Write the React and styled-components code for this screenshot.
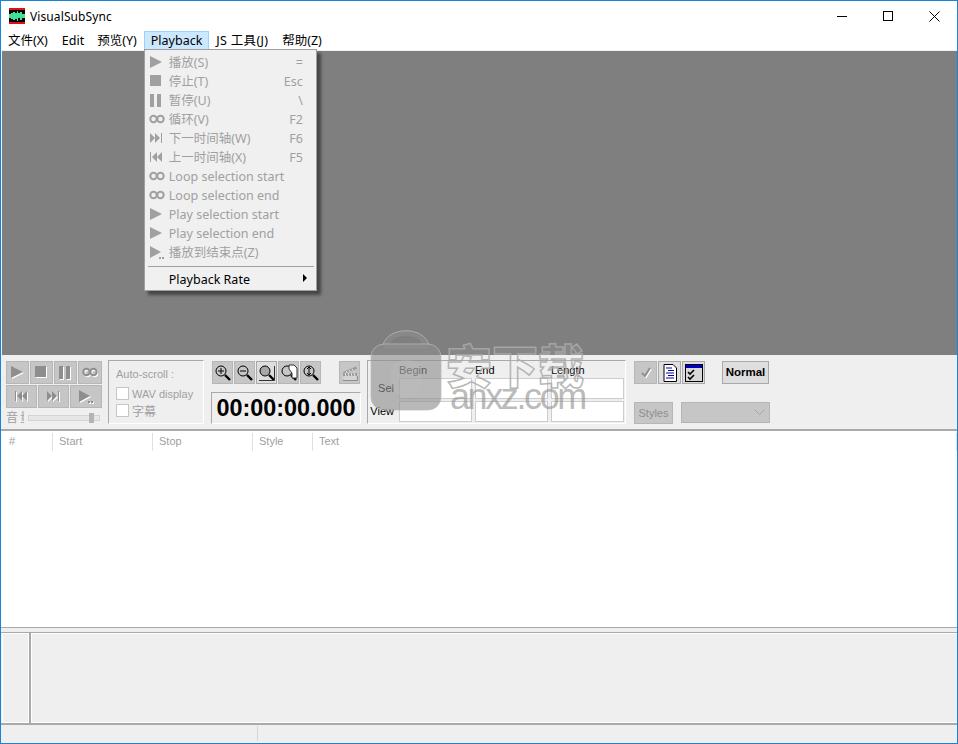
import React from 'react';
import styled, { createGlobalStyle } from 'styled-components';

const GlobalStyle = createGlobalStyle`
  html, body {
    margin: 0;
    padding: 0;
    background: #fff;
  }
  * {
    box-sizing: border-box;
  }
`;

const UI_FONT = '"Noto Sans", "Noto Sans CJK SC", sans-serif';
const OLD_FONT = '"Liberation Sans", "Noto Sans CJK SC", sans-serif';
const DISABLED = '#a0a0a0';

const glyphs = {
  play: <polygon points="1,1 13,7 1,13" />,
  stop: <rect x="1" y="1" width="11" height="11" />,
  pause: (
    <>
      <rect x="1" y="1" width="4" height="13" />
      <rect x="8" y="1" width="4" height="13" />
    </>
  ),
  loop: (
    <g fill="none" stroke="currentColor" strokeWidth="2">
      <circle cx="4.5" cy="7" r="3.2" />
      <circle cx="11.5" cy="7" r="3.2" />
    </g>
  ),
  next: (
    <>
      <polygon points="1,2 6,7 1,12" />
      <polygon points="6,2 11,7 6,12" />
      <rect x="12" y="2" width="1" height="10" />
    </>
  ),
  prev: (
    <>
      <rect x="1" y="2" width="1" height="10" />
      <polygon points="8,2 3,7 8,12" />
      <polygon points="13,2 8,7 13,12" />
    </>
  ),
  playEnd: (
    <>
      <polygon points="1,1 12,7 1,13" />
      <rect x="10" y="12" width="2" height="2" />
      <rect x="13" y="12" width="2" height="2" />
    </>
  ),
  check: <polyline points="4,8 7,11 12,3" fill="none" stroke="currentColor" strokeWidth="2" />,
};

const MenuGlyph = ({ name }) => (
  <GlyphSvg viewBox="0 0 16 15" width="16" height="15" $color={DISABLED}>
    {glyphs[name]}
  </GlyphSvg>
);

// disabled toolbar glyph: white copy shifted down/right under the grey one
const BevelGlyph = ({ name, size = 16 }) => (
  <svg viewBox="0 0 16 16" width={size} height={size} fill="currentColor">
    <g transform="translate(1 1)" color="#fff" fill="#fff">
      {glyphs[name]}
    </g>
    <g color="#8e8e8e" fill="#8e8e8e">
      {glyphs[name]}
    </g>
  </svg>
);

const ClapperIcon = () => (
  <svg viewBox="0 0 16 16" width="16" height="16">
    <path d="M1 7 L14 1.5 L15 4 L2 8 Z" fill="#9a9a9a" />
    <path d="M4 6 L5 7 M7 4.8 L8 6 M10 3.6 L11 5" stroke="#e8e8e8" />
    <rect x="1" y="8" width="14" height="3" fill="#9a9a9a" />
    <path d="M3 8 L4 11 M6 8 L7 11 M9 8 L10 11 M12 8 L13 11" stroke="#e8e8e8" />
    <rect x="1.5" y="11" width="13" height="4" fill="#d4d4d4" />
    <path d="M1 15.5 H15.5 V11" fill="none" stroke="#8e8e8e" />
  </svg>
);

const Lens = ({ fill = 'none', children }) => (
  <svg viewBox="0 0 18 18" width="18" height="18" fill="none" stroke="#000">
    <circle cx="7" cy="7" r="5" fill={fill} />
    <path d="M11 11 L16 16" strokeWidth="2.4" />
    {children}
  </svg>
);

const zoomIcons = [
  <Lens key="in"><path d="M4 7 H10 M7 4 V10" /></Lens>,
  <Lens key="out"><path d="M4 7 H10" /></Lens>,
  <Lens key="sel" fill="#a8a8a8"><path d="M1 16.5 H16.5 V2" stroke="#333" /></Lens>,
  <Lens key="all"><path d="M9 1 H14 L17 4 V14 H12 V9 L9 5 Z" fill="#fff" stroke="#333" /></Lens>,
  <Lens key="vert"><path d="M7 3 V11 M5 5 L7 3 L9 5 M5 9 L7 11 L9 9" /></Lens>,
];

const AppIcon = () => (
  <svg viewBox="0 0 16 16" width="16" height="16">
    <rect width="16" height="16" fill="#000" />
    <rect width="16" height="2" fill="#e01010" />
    <rect y="14" width="16" height="2" fill="#e01010" />
    <path d="M0 6 H2 V5 H4 V4 H6 V5 H8 V3 H9 V5 H11 V4 H13 V6 H16 V10 H13 V12 H11 V10 H9 V13 H8 V11 H6 V12 H4 V11 H2 V10 H0 Z" fill="#3ee09a" />
  </svg>
);

const DocIcon = () => (
  <svg viewBox="0 0 16 18" width="16" height="18">
    <path d="M2 .5 H11 L14.5 4 V17.5 H2 Z" fill="#fff" stroke="#000" />
    <path d="M4 4 H10 M6 6.5 H12 M4 9 H12 M6 11.5 H12 M4 14 H12" stroke="#0000a8" strokeWidth="1.2" />
  </svg>
);

const CheckWindowIcon = () => (
  <svg viewBox="0 0 18 18" width="18" height="18">
    <rect x=".5" y=".5" width="17" height="17" fill="#d8d8d8" stroke="#000" />
    <rect x="1" y="1" width="16" height="3" fill="#0000c8" />
    <path d="M3 8 L5 10 L9 6 M3 13 L5 15 L9 11" fill="none" stroke="#000" strokeWidth="1.6" />
  </svg>
);

const menuRows = [
  { icon: 'play', label: '播放(S)', key: '=' },
  { icon: 'stop', label: '停止(T)', key: 'Esc' },
  { icon: 'pause', label: '暂停(U)', key: '\\' },
  { icon: 'loop', label: '循环(V)', key: 'F2' },
  { icon: 'next', label: '下一时间轴(W)', key: 'F6' },
  { icon: 'prev', label: '上一时间轴(X)', key: 'F5' },
  { icon: 'loop', label: 'Loop selection start' },
  { icon: 'loop', label: 'Loop selection end' },
  { icon: 'play', label: 'Play selection start' },
  { icon: 'play', label: 'Play selection end' },
  { icon: 'playEnd', label: '播放到结束点(Z)' },
];

const columns = [
  { label: '#', width: 52 },
  { label: 'Start', width: 100 },
  { label: 'Stop', width: 100 },
  { label: 'Style', width: 60 },
  { label: 'Text' },
];

function App() {
  return (
    <Window>
      <GlobalStyle />
      <TitleBar>
        <AppIcon />
        <TitleText>VisualSubSync</TitleText>
        <WindowControls>
          <ControlButton>
            <svg width="10" height="10"><path d="M0 5.5 H10" stroke="#000" /></svg>
          </ControlButton>
          <ControlButton>
            <svg width="10" height="10"><rect x=".5" y=".5" width="9" height="9" fill="none" stroke="#000" /></svg>
          </ControlButton>
          <ControlButton>
            <svg width="11" height="11"><path d="M.5 .5 L10.5 10.5 M10.5 .5 L.5 10.5" stroke="#000" /></svg>
          </ControlButton>
        </WindowControls>
      </TitleBar>

      <MenuBar>
        <MenuItem>文件(X)</MenuItem>
        <MenuItem $tight>Edit</MenuItem>
        <MenuItem>预览(Y)</MenuItem>
        <MenuItem $open>
          Playback
          <Dropdown>
            {menuRows.map(row => (
              <DropRow key={row.label}>
                <DropIcon><MenuGlyph name={row.icon} /></DropIcon>
                <DropLabel>{row.label}</DropLabel>
                <DropKey>{row.key}</DropKey>
              </DropRow>
            ))}
            <DropSeparator />
            <DropRow $enabled>
              <DropIcon />
              <DropLabel>Playback Rate</DropLabel>
              <SubArrow />
            </DropRow>
          </Dropdown>
        </MenuItem>
        <MenuItem $wide>JS 工具(J)</MenuItem>
        <MenuItem>帮助(Z)</MenuItem>
      </MenuBar>

      <WaveArea />

      <Toolbar>
        <PlayerPanel>
          <TransportRow $columns="23px 23px 23px 24px">
            <ToolButton><BevelGlyph name="play" /></ToolButton>
            <ToolButton><BevelGlyph name="stop" /></ToolButton>
            <ToolButton><BevelGlyph name="pause" /></ToolButton>
            <ToolButton><BevelGlyph name="loop" /></ToolButton>
          </TransportRow>
          <TransportRow $columns="31px 31px 32px">
            <ToolButton><BevelGlyph name="prev" /></ToolButton>
            <ToolButton><BevelGlyph name="next" /></ToolButton>
            <ToolButton><BevelGlyph name="playEnd" /></ToolButton>
          </TransportRow>
          <VolumeRow>
            <VolumeLabel>音量</VolumeLabel>
            <VolumeTrack><VolumeThumb /></VolumeTrack>
          </VolumeRow>
        </PlayerPanel>

        <AutoScrollGroup>
          <GroupCaption>Auto-scroll :</GroupCaption>
          <CheckRow><CheckBox />WAV display</CheckRow>
          <CheckRow $cjk><CheckBox />字幕</CheckRow>
        </AutoScrollGroup>

        <TimePanel>
          <ZoomRow>
            {zoomIcons.map((icon, i) => (
              <ZoomButton key={i} $pressed={i === 2}>{icon}</ZoomButton>
            ))}
            <ClapperButton><ClapperIcon /></ClapperButton>
          </ZoomRow>
          <TimeDisplay>00:00:00.000</TimeDisplay>
        </TimePanel>

        <SelectionGroup>
          <span />
          <ColumnLabel>Begin</ColumnLabel>
          <ColumnLabel>End</ColumnLabel>
          <ColumnLabel>Length</ColumnLabel>
          <RowLabel>Sel</RowLabel>
          <TimeInput disabled />
          <TimeInput disabled />
          <TimeInput disabled />
          <RowLabel>View</RowLabel>
          <TimeInput disabled />
          <TimeInput disabled />
          <TimeInput disabled />
        </SelectionGroup>

        <SidePanel>
          <SideTop>
            <ModeButton $off><BevelGlyph name="check" /></ModeButton>
            <ModeButton><DocIcon /></ModeButton>
            <ModeButton><CheckWindowIcon /></ModeButton>
            <NormalButton>Normal</NormalButton>
          </SideTop>
          <SideBottom>
            <StylesButton>Styles</StylesButton>
            <StylesSelect>
              <svg width="11" height="7"><path d="M.5 .5 L5.5 5.5 L10.5 .5" fill="none" stroke="#a8a8a8" /></svg>
            </StylesSelect>
          </SideBottom>
        </SidePanel>
      </Toolbar>

      <SubtitleList>
        <ListHeader>
          {columns.map(col => (
            <HeaderCell key={col.label} $width={col.width}>{col.label}</HeaderCell>
          ))}
        </ListHeader>
      </SubtitleList>

      <EditorArea>
        <EditorPanes>
          <SidePane />
          <Splitter />
          <TextPane />
        </EditorPanes>
      </EditorArea>

      <StatusBar>
        <StatusCell />
        <StatusCell $grow />
      </StatusBar>

      <Watermark aria-hidden="true">
        <svg width="72" height="82" viewBox="0 0 72 82">
          <path d="M16 16 C20 -1 52 -1 56 16 Z" fill="none" stroke="rgba(142,142,142,.62)" strokeWidth="5" />
          <path d="M13 15 C18 -4 54 -4 59 15" fill="none" stroke="rgba(185,185,185,.8)" />
          <rect x="1" y="14" width="70" height="66" rx="13" fill="rgba(142,142,142,.62)" stroke="rgba(185,185,185,.7)" />
          <path d="M21 34 L36 29 L51 34 V50 C51 60 44 66 36 69 C28 66 21 60 21 50 Z" fill="rgba(190,190,190,.3)" />
        </svg>
        <WatermarkChars>安下载</WatermarkChars>
        <WatermarkSite>anxz.com</WatermarkSite>
      </Watermark>
    </Window>
  );
}

const Window = styled.div`
  position: relative;
  width: 958px;
  height: 744px;
  display: flex;
  flex-direction: column;
  overflow: hidden;
  background: #fff;
  border: 1px solid #1883d7;
  font-family: ${UI_FONT};
  font-size: 12.5px;
  color: #000;
`;

const GlyphSvg = styled.svg`
  display: block;
  fill: ${p => p.$color};
  color: ${p => p.$color};
`;

const TitleBar = styled.div`
  flex: none;
  height: 30px;
  display: flex;
  align-items: center;
  padding-left: 8px;
`;

const TitleText = styled.span`
  margin-left: 5px;
  font-size: 12px;
  letter-spacing: 0.1px;
`;

const WindowControls = styled.div`
  margin-left: auto;
  display: flex;
  height: 100%;
`;

const ControlButton = styled.div`
  width: 46px;
  display: flex;
  align-items: center;
  justify-content: center;

  svg {
    display: block;
  }
`;

const MenuBar = styled.div`
  flex: none;
  height: 20px;
  display: flex;
  border-bottom: 1px solid #f0f0f0;
`;

const MenuItem = styled.div`
  position: relative;
  height: 19px;
  line-height: 18px;
  padding: 0 6px;
  margin-right: ${p => (p.$tight ? -1 : 0)}px;
  letter-spacing: ${p => (p.$wide ? 0.3 : 0)}px;
  border: 1px solid ${p => (p.$open ? '#99d1ff' : 'transparent')};
  background: ${p => (p.$open ? '#cce8ff' : 'transparent')};
  white-space: nowrap;
`;

const Dropdown = styled.div`
  position: absolute;
  z-index: 2;
  left: -1px;
  top: 17px;
  width: 173px;
  height: 242px;
  padding-top: 3px;
  background: #f0f0f0;
  border: 1px solid #a0a0a0;
  box-shadow: 4px 4px 3px rgba(0, 0, 0, 0.45);
`;

const DropRow = styled.div`
  height: 19px;
  display: flex;
  align-items: center;
  color: ${p => (p.$enabled ? '#000' : DISABLED)};
`;

const DropIcon = styled.span`
  width: 24px;
  padding-left: 4px;
  flex: none;
`;

const DropLabel = styled.span`
  flex: 1;
`;

const DropKey = styled.span`
  padding-right: 13px;
`;

const DropSeparator = styled.div`
  height: 1px;
  margin: 4px 2px 3px 3px;
  background: #a0a0a0;
`;

const SubArrow = styled.span`
  margin: 0 9px 4px 0;
  border-left: 4px solid #000;
  border-top: 4px solid transparent;
  border-bottom: 4px solid transparent;
`;

const WaveArea = styled.div`
  flex: none;
  height: 304px;
  background: #7f7f7f;
  border-left: 1px solid #efefef;
`;

const Toolbar = styled.div`
  flex: none;
  height: 76px;
  display: flex;
  align-items: flex-start;
  padding: 5px 0 0 5px;
  background: #efefef;
  border-bottom: 2px solid #a9a9a9;
  font-family: ${OLD_FONT};
  font-size: 11px;
`;

const PlayerPanel = styled.div`
  width: 96px;
  padding-top: 1px;
  display: flex;
  flex-direction: column;
  gap: 1px;
`;

const TransportRow = styled.div`
  display: grid;
  grid-template-columns: ${p => p.$columns};
  grid-auto-rows: 23px;
  gap: 1px;
`;

const ToolButton = styled.div`
  display: flex;
  align-items: center;
  justify-content: center;
  background: #c6c6c6;
  border: 1px solid #b6b6b6;

  svg {
    display: block;
  }
`;

const VolumeRow = styled.div`
  display: flex;
  align-items: center;
  height: 16px;
  margin-top: 1px;
`;

const VolumeLabel = styled.span`
  width: 18px;
  margin: -3px 4px 0 0;
  overflow: hidden;
  white-space: nowrap;
  font-size: 12px;
  letter-spacing: 2px;
  color: ${DISABLED};
`;

const VolumeTrack = styled.div`
  position: relative;
  width: 72px;
  height: 6px;
  background: #e6e6e6;
  border: 1px solid #d4d4d4;
`;

const VolumeThumb = styled.span`
  position: absolute;
  left: 60px;
  top: -3px;
  width: 5px;
  height: 10px;
  background: #b4b4b4;
`;

const Grooved = styled.div`
  border: 1px solid;
  border-color: #a9a9a9 #fff #fff #a9a9a9;
`;

const AutoScrollGroup = styled(Grooved)`
  width: 96px;
  height: 64px;
  margin-left: 6px;
  padding: 7px 0 0 7px;
  color: ${DISABLED};
`;

const GroupCaption = styled.div`
  height: 17px;
  line-height: 13px;
`;

const CheckRow = styled.div`
  display: flex;
  align-items: center;
  gap: 3px;
  height: 17px;
  font-size: ${p => (p.$cjk ? 12 : 11)}px;
`;

const CheckBox = styled.span`
  width: 13px;
  height: 13px;
  background: #fff;
  border: 1px solid #c6c6c6;
`;

const TimePanel = styled.div`
  width: 150px;
  margin-left: 7px;
  padding-top: 1px;
`;

const ZoomRow = styled.div`
  display: flex;
  gap: 1px;
  padding-left: 1px;
`;

const ZoomButton = styled(ToolButton)`
  width: 21px;
  height: 23px;
  background: ${p => (p.$pressed ? '#dedede' : '#c6c6c6')};
  border-color: ${p => (p.$pressed ? '#a9a9a9' : '#b6b6b6')};
`;

const ClapperButton = styled(ToolButton)`
  width: 21px;
  height: 23px;
  margin-left: 17px;
`;

const TimeDisplay = styled(Grooved)`
  height: 32px;
  margin-top: 8px;
  text-align: center;
  font-size: 23.4px;
  font-weight: bold;
  line-height: 30px;
  white-space: nowrap;
`;

const SelectionGroup = styled(Grooved)`
  width: 259px;
  height: 64px;
  margin-left: 6px;
  padding-left: 1px;
  display: grid;
  grid-template-columns: 27px 73px 73px 73px;
  grid-template-rows: 15px 21px 21px;
  column-gap: 3px;
  row-gap: 2px;
`;

const ColumnLabel = styled.span`
  line-height: 18px;
  height: 15px;
`;

const RowLabel = styled.span`
  padding-right: 2px;
  text-align: right;
  line-height: 21px;
  white-space: nowrap;
`;

const TimeInput = styled.input`
  width: 73px;
  height: 21px;
  padding: 0;
  background: #fff;
  border: 1px solid #cdcdcd;
`;

const SidePanel = styled.div`
  width: 136px;
  margin-left: 8px;
  padding-top: 1px;
`;

const SideTop = styled.div`
  display: flex;
  gap: 1px;
`;

const ModeButton = styled(ToolButton)`
  width: 23px;
  height: 23px;
  background: ${p => (p.$off ? '#c6c6c6' : '#dedede')};
  border-color: ${p => (p.$off ? '#b6b6b6' : '#a9a9a9')};
`;

const NormalButton = styled.div`
  width: 47px;
  height: 23px;
  margin-left: 16px;
  line-height: 21px;
  text-align: center;
  font-weight: bold;
  font-size: 11.5px;
  background: #dedede;
  border: 1px solid #a9a9a9;
`;

const SideBottom = styled.div`
  display: flex;
  gap: 8px;
  margin-top: 18px;
`;

const StylesButton = styled.div`
  width: 39px;
  height: 22px;
  line-height: 20px;
  text-align: center;
  color: #8e8e8e;
  background: #c6c6c6;
  border: 1px solid #b6b6b6;
`;

const StylesSelect = styled.div`
  width: 89px;
  height: 21px;
  display: flex;
  align-items: center;
  justify-content: flex-end;
  padding-right: 4px;
  background: #c6c6c6;
  border: 1px solid #b6b6b6;
`;

const SubtitleList = styled.div`
  flex: none;
  height: 196px;
  background: #fff;
  font-family: ${OLD_FONT};
  font-size: 11px;
  color: ${DISABLED};
`;

const ListHeader = styled.div`
  display: flex;
  padding-top: 2px;
  height: 20px;
`;

const HeaderCell = styled.div`
  flex: ${p => (p.$width ? `0 0 ${p.$width}px` : '1')};
  padding-left: ${p => (p.$width === 52 ? 8 : 6)}px;
  line-height: 16px;
  border-right: 1px solid #e0e0e0;
`;

const EditorArea = styled.div`
  flex: none;
  height: 98px;
  padding-top: 4px;
  background: #efefef;
  border-top: 1px solid #a9a9a9;
  border-bottom: 2px solid #a9a9a9;
`;

const EditorPanes = styled.div`
  height: 91px;
  display: flex;
  padding-left: 1px;
  border-top: 1px solid #a9a9a9;
`;

const SidePane = styled.div`
  width: 27px;
  border: 1px solid #fff;
`;

const Splitter = styled.div`
  width: 2px;
  background: #a9a9a9;
`;

const TextPane = styled.div`
  flex: 1;
  border: 1px solid #fff;
  border-right: 0;
`;

const StatusBar = styled.div`
  flex: 1;
  display: flex;
  padding: 1px 0 2px;
  background: #efefef;
`;

const StatusCell = styled.div`
  width: ${p => (p.$grow ? 'auto' : '257px')};
  flex: ${p => (p.$grow ? 1 : 'none')};
  border-right: ${p => (p.$grow ? 0 : '1px solid #d6d6d6')};
`;

const Watermark = styled.div`
  position: absolute;
  left: 369px;
  top: 329px;
  width: 230px;
  height: 85px;
  pointer-events: none;

  svg {
    display: block;
    overflow: visible;
  }
`;

const WatermarkChars = styled.span`
  position: absolute;
  left: 76px;
  top: 0;
  font-family: "Noto Sans CJK SC", sans-serif;
  font-size: 46px;
  font-weight: 900;
  line-height: 66px;
  white-space: nowrap;
  color: rgba(255, 255, 255, 0.08);
  -webkit-text-stroke: 1.5px rgba(170, 170, 170, 0.85);
`;

const WatermarkSite = styled.span`
  position: absolute;
  left: 80px;
  top: 47px;
  font-family: "Liberation Sans", sans-serif;
  font-size: 36px;
  letter-spacing: -2.4px;
  line-height: 40px;
  color: rgba(142, 142, 142, 0.62);
  white-space: nowrap;
`;

export default App;
